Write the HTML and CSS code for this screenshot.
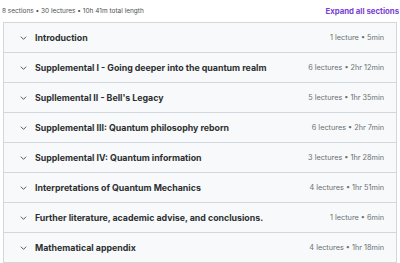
FILE: index.html
```
<!DOCTYPE html>
<html lang="en">
<head>
  <meta charset="UTF-8" />
  <title>Course content</title>
  <link rel="stylesheet" href="styles.css">
</head>
<body>
  <div class="content-header">
    <span class="summary">8 sections • 30 lectures • 10h 41m total length</span>
    <button class="expand-all">Expand all sections</button>
  </div>

  <div class="sections">
    <div class="section"><span class="chevron"><svg viewBox="0 0 10 6" width="7" height="4"><path d="M1 1l4 4 4-4" fill="none" stroke="#2d2f31" stroke-width="1.2"/></svg></span><span class="title">Introduction</span><span class="meta">1 lecture • 5min</span></div>
    <div class="section"><span class="chevron"><svg viewBox="0 0 10 6" width="7" height="4"><path d="M1 1l4 4 4-4" fill="none" stroke="#2d2f31" stroke-width="1.2"/></svg></span><span class="title">Supplemental I - Going deeper into the quantum realm</span><span class="meta">6 lectures • 2hr 12min</span></div>
    <div class="section"><span class="chevron"><svg viewBox="0 0 10 6" width="7" height="4"><path d="M1 1l4 4 4-4" fill="none" stroke="#2d2f31" stroke-width="1.2"/></svg></span><span class="title">Supllemental II - Bell's Legacy</span><span class="meta">5 lectures • 1hr 35min</span></div>
    <div class="section"><span class="chevron"><svg viewBox="0 0 10 6" width="7" height="4"><path d="M1 1l4 4 4-4" fill="none" stroke="#2d2f31" stroke-width="1.2"/></svg></span><span class="title">Supplemental III: Quantum philosophy reborn</span><span class="meta">6 lectures • 2hr 7min</span></div>
    <div class="section"><span class="chevron"><svg viewBox="0 0 10 6" width="7" height="4"><path d="M1 1l4 4 4-4" fill="none" stroke="#2d2f31" stroke-width="1.2"/></svg></span><span class="title">Supplemental IV: Quantum information</span><span class="meta">3 lectures • 1hr 28min</span></div>
    <div class="section"><span class="chevron"><svg viewBox="0 0 10 6" width="7" height="4"><path d="M1 1l4 4 4-4" fill="none" stroke="#2d2f31" stroke-width="1.2"/></svg></span><span class="title">Interpretations of Quantum Mechanics</span><span class="meta">4 lectures • 1hr 51min</span></div>
    <div class="section"><span class="chevron"><svg viewBox="0 0 10 6" width="7" height="4"><path d="M1 1l4 4 4-4" fill="none" stroke="#2d2f31" stroke-width="1.2"/></svg></span><span class="title">Further literature, academic advise, and conclusions.</span><span class="meta">1 lecture • 6min</span></div>
    <div class="section"><span class="chevron"><svg viewBox="0 0 10 6" width="7" height="4"><path d="M1 1l4 4 4-4" fill="none" stroke="#2d2f31" stroke-width="1.2"/></svg></span><span class="title">Mathematical appendix</span><span class="meta">4 lectures • 1hr 18min</span></div>
  </div>
</body>
</html>
```

FILE: styles.css
```
body {
  margin: 0;
  padding: 0 3px;
  font-family: Inter, "Noto Sans", sans-serif;
  color: #2d2f31;
  background: #fff;
}
.content-header {
  display: flex;
  justify-content: space-between;
  align-items: center;
  height: 22px;
}
.summary {
  font-size: 6.5px;
  color: #4b4f52;
  margin-left: -1px;
}
.expand-all {
  border: none;
  background: none;
  padding: 0;
  font-family: inherit;
  font-size: 7.8px;
  font-weight: 700;
  color: #7a3fd4;
  margin-right: -2px;
}
.sections {
  border: 1px solid #d1d7dc;
}
.section {
  display: flex;
  align-items: center;
  height: 29px;
  background: #f7f9fa;
  border-top: 1px solid #d1d7dc;
  padding: 0 12px 0 16px;
}
.section:first-child {
  border-top: none;
}
.chevron {
  display: flex;
  width: 15px;
}
.title {
  flex: 1;
  font-size: 8.8px;
  font-weight: 700;
}
.meta {
  font-size: 7.3px;
  color: #6a6f73;
}
```
